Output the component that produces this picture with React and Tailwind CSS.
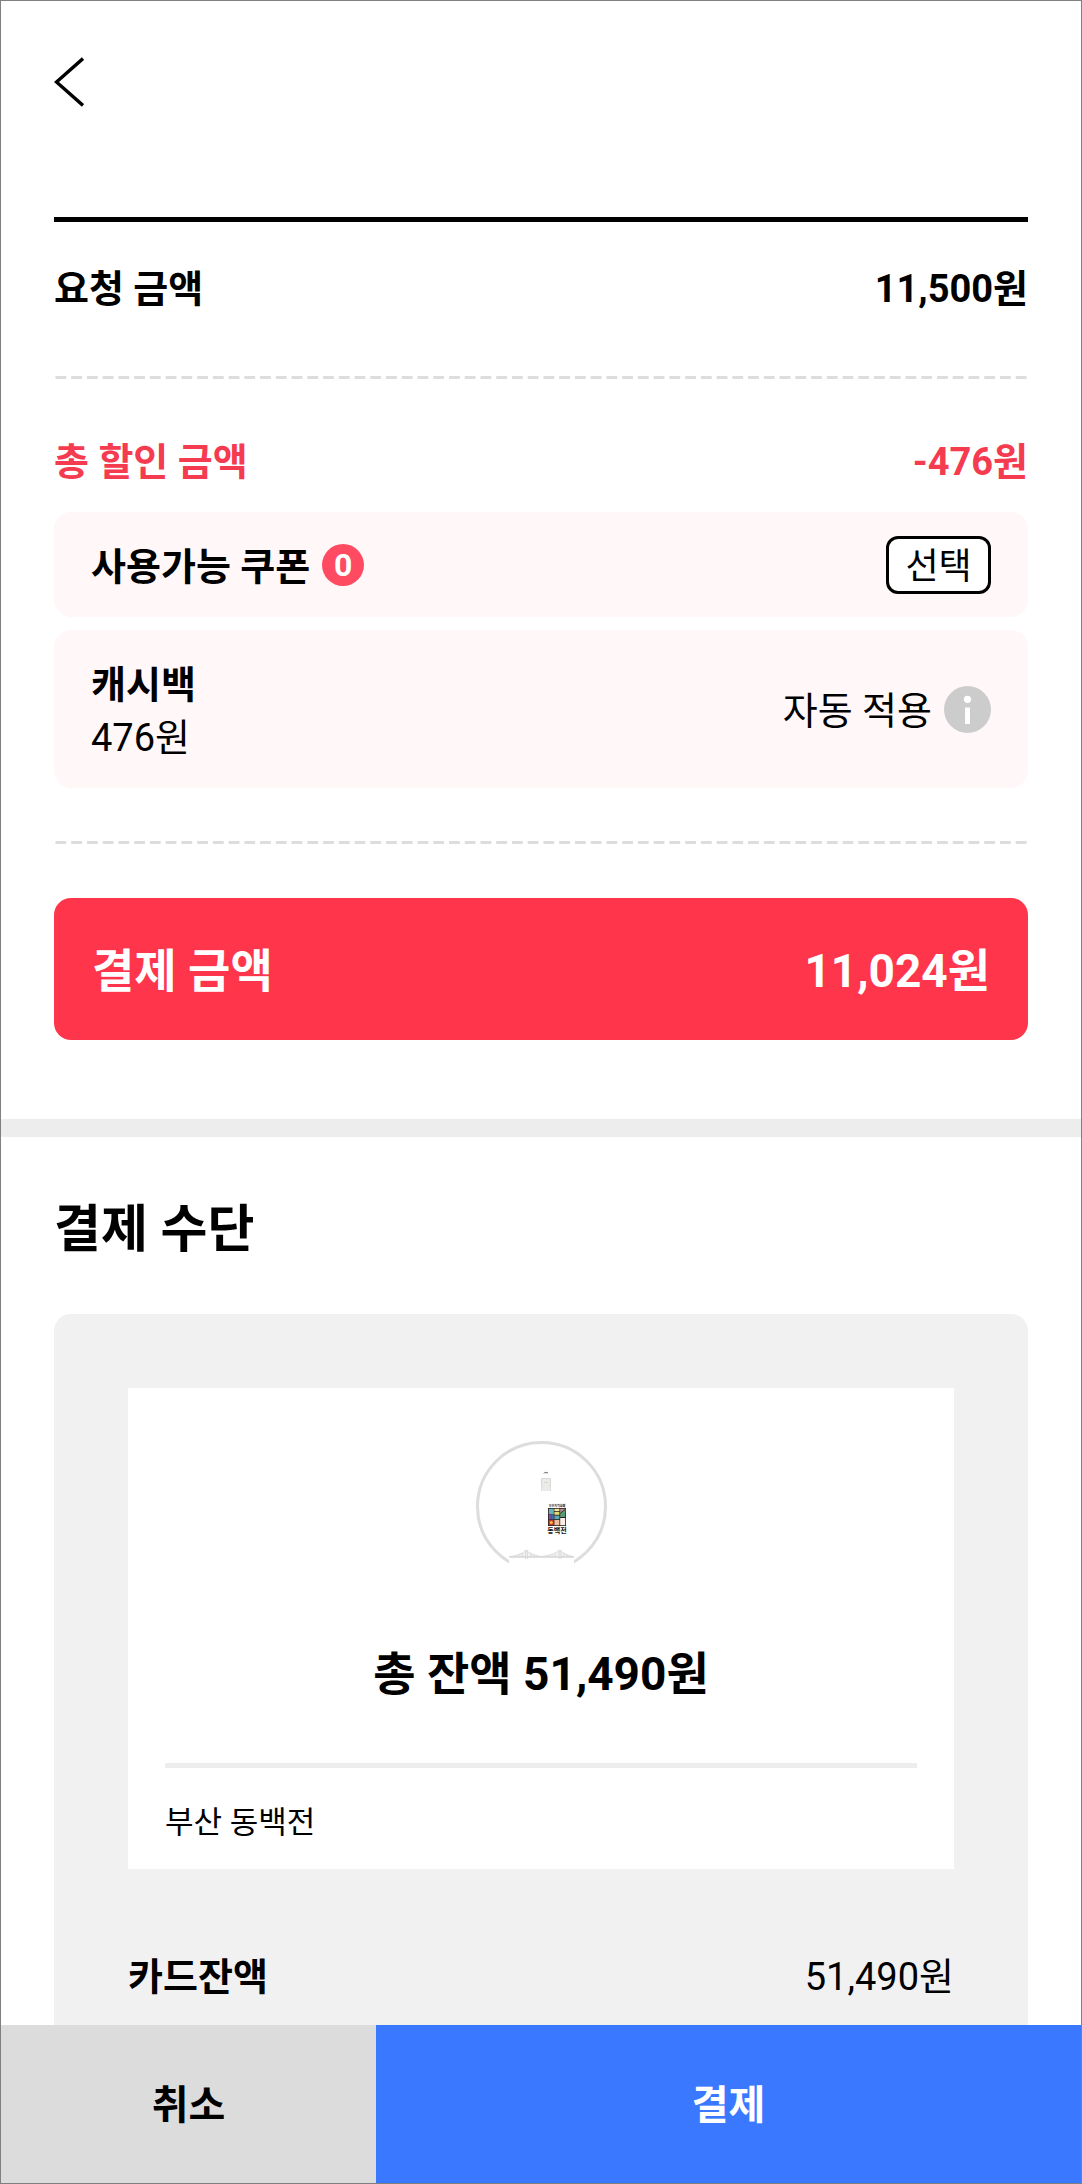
import React, { useState } from 'react';

const payment = {
  requested: 11500,
  discount: 476,
  coupons: 0,
  balance: 51490,
};

const formatWon = (value) => `${value.toLocaleString('en-US')}원`;

const DashedLine = () => (
  <svg className="block w-full h-[3px]" aria-hidden="true">
    <line
      x1="0.15%"
      x2="99.85%"
      y1="1.5"
      y2="1.5"
      stroke="#dddddd"
      strokeWidth="3"
      pathLength="987"
      strokeDasharray="11 5"
    />
  </svg>
);

const BackIcon = () => (
  <svg className="block" width="30" height="50" viewBox="0 0 30 50" fill="none" aria-hidden="true">
    <path d="M29 1.5 L2.5 25 L29 48.5" stroke="#000" strokeWidth="3.4" />
  </svg>
);

const InfoIcon = () => (
  <svg className="block" width="47" height="47" viewBox="0 0 47 47" aria-hidden="true">
    <circle cx="23.5" cy="23.5" r="23.5" fill="#cccccc" />
    <circle cx="23.5" cy="13.3" r="3.6" fill="#fff" />
    <rect x="21" y="21.5" width="5" height="16.5" fill="#fff" />
  </svg>
);

const CardLogo = () => (
  <svg width="131" height="131" viewBox="0 0 131 131" role="img" aria-label="동백전">
    <circle cx="65.5" cy="65.5" r="64" fill="#fff" stroke="#dddddd" strokeWidth="3" />
    <rect x="33" y="117" width="65" height="14" fill="#fff" />

    {/* bell */}
    <path d="M68 32.5 Q69 30.5 70 31.5 T72 31.5" stroke="#555" strokeWidth="0.9" fill="none" />
    <path d="M66 37 H74 Q75 37 75 38 V50 H65 V38 Q65 37 66 37 Z" fill="#ebebe9" />
    <path d="M65.5 37.5 H74.5 M65.5 38 V44 L66.5 46 M74.5 38 V44 L73.5 46 M68 41.5 H72" stroke="#cfcfcd" strokeWidth="0.7" fill="none" />
    <path d="M65.5 46 V50 M74.5 46 V50" stroke="#d8d8d6" strokeWidth="0.7" />

    {/* mosaic mark */}
    <text x="81" y="65.5" textAnchor="middle" fontSize="3" fontWeight="700" fill="#222">부산지역화폐</text>
    <rect x="72" y="67" width="18" height="18" fill="#2b2323" />
    <rect x="72.8" y="67.8" width="5" height="5.4" fill="#68b3bb" />
    <rect x="72.8" y="73.4" width="2.2" height="5" fill="#7a4f9c" />
    <rect x="75.2" y="73.4" width="2.6" height="5" fill="#3f6db3" />
    <rect x="72.8" y="79" width="5" height="5.2" fill="#c9352b" />
    <circle cx="75.3" cy="81.5" r="1.5" fill="#f9c23c" />
    <rect x="78.4" y="67.8" width="5" height="2.2" fill="#f3e79a" />
    <rect x="78.4" y="70.8" width="5" height="3" fill="#e0dc74" />
    <rect x="78.4" y="74.6" width="5" height="3.6" fill="#5ba7b4" />
    <rect x="78.4" y="79" width="5" height="5.2" fill="#f0bb9f" />
    <rect x="84.2" y="67.8" width="5" height="4.4" fill="#c08a94" />
    <path d="M84.2 71.6 L89.2 67.8 V76 H84.2 Z" fill="#5a9a72" />
    <path d="M84.2 72.4 L89.2 68.4" stroke="#2b2323" strokeWidth="0.8" />
    <rect x="84.2" y="77" width="5" height="7.2" fill="#fbeee6" />
    <text x="81" y="91.5" textAnchor="middle" fontSize="7" fontWeight="700" fill="#111">동백전</text>

    {/* bridge */}
    <g fill="#f1f1f1">
      <path d="M35 116 Q46 114 50 109 Q55 114 64 116 Z" />
      <path d="M68 116 Q79 114 84 109 Q88 114 97 116 Z" />
    </g>
    <g stroke="#d6d6d6" strokeWidth="0.8" fill="none">
      <path d="M33 116 H98" strokeWidth="1.4" />
      <path d="M34 115.5 Q46 114 50 109 Q55 114 65 115.5 Q78 114 84 109 Q88 114 97 115.5" />
      <path d="M49.5 109 V118 M51.5 109 V118 M83 109 V118 M85 109 V118" />
      <path d="M40 114 V116 M43 113 V116 M46 112 V116 M55 112 V116 M58 113 V116 M61 114 V116 M73 114 V116 M76 113 V116 M79 112 V116 M88 112 V116 M91 113 V116 M94 114 V116" />
    </g>
  </svg>
);

const App = () => {
  const [step, setStep] = useState('review');
  const total = payment.requested - payment.discount;

  return (
    <div className="flex h-screen flex-col border border-[#808080] bg-white font-[Roboto,'Noto_Sans_CJK_KR',sans-serif] text-[38px] leading-[50px] text-black">
      <main className="min-h-0 flex-1 overflow-y-auto [scrollbar-width:none]">
        <section className="px-[53px] pb-[79px]">
          <header className="pt-14 pb-[110px]">
            <button type="button" aria-label="뒤로" className="block" onClick={() => setStep('review')}>
              <BackIcon />
            </button>
          </header>

          <div className="flex justify-between border-t-5 border-black pt-[42px] pb-[62px] font-bold">
            <span>요청 금액</span>
            <span>{formatWon(payment.requested)}</span>
          </div>

          <DashedLine />

          <div className="flex justify-between pt-[58px] pb-[25px] font-bold text-[#f53b50]">
            <span>총 할인 금액</span>
            <span>-{formatWon(payment.discount)}</span>
          </div>

          <div className="mb-[53px] flex flex-col gap-[13px]">
            <div className="flex h-[105px] items-center justify-between rounded-[17px] bg-[#fff7f8] px-[37px]">
              <div className="flex items-center gap-3 font-bold">
                <span className="pt-1">사용가능 쿠폰</span>
                <span className="flex size-[42px] items-center justify-center rounded-full bg-[#ff4b62] text-[32px] text-white">
                  {payment.coupons}
                </span>
              </div>
              <button
                type="button"
                className="h-[58px] w-[105px] rounded-xl border-3 border-black bg-white pt-1 text-[36px] leading-10"
              >
                선택
              </button>
            </div>

            <div className="flex h-[158px] items-center justify-between rounded-[17px] bg-[#fff7f8] px-[37px] leading-[53px]">
              <div className="pt-1.5">
                <p className="font-bold">캐시백</p>
                <p>{formatWon(payment.discount)}</p>
              </div>
              <div className="flex items-center gap-3">
                <span className="pt-1">자동 적용</span>
                <button type="button" aria-label="캐시백 안내">
                  <InfoIcon />
                </button>
              </div>
            </div>
          </div>

          <DashedLine />

          <div className="mt-[54px] flex h-[142px] items-center justify-between rounded-[17px] bg-[#ff364b] px-[38px] pt-1 text-[46px] font-bold text-white">
            <span>결제 금액</span>
            <span>{formatWon(total)}</span>
          </div>
        </section>

        <section className="border-t-18 border-[#ededed] px-[53px]">
          <h2 className="pt-[58px] pb-[49px] text-[51px] leading-[70px] font-bold">결제 수단</h2>

          <div className="rounded-t-[17px] bg-[#f1f1f1] px-[74px] pt-[74px] pb-24">
            <div className="bg-white px-[37px]">
              <div className="flex flex-col items-center border-b-5 border-[#ededed] pt-[53px] pb-[59px]">
                <CardLogo />
                <p className="pt-[72px] text-[46px] leading-[60px] font-bold">총 잔액 {formatWon(payment.balance)}</p>
              </div>
              <p className="pt-[35px] pb-[26px] text-[31px] leading-10">부산 동백전</p>
            </div>

            <div className="flex justify-between pt-[83px]">
              <span className="font-bold">카드잔액</span>
              <span>{formatWon(payment.balance)}</span>
            </div>
          </div>
        </section>
      </main>

      <footer className="grid h-[158px] shrink-0 grid-cols-[25fr_47fr] text-[40px] font-bold">
        <button type="button" className="bg-[#dcdcdc] pt-1" onClick={() => setStep('cancelled')}>
          취소
        </button>
        <button
          type="button"
          className="bg-[#3a79ff] pt-1 text-white"
          disabled={step === 'paid'}
          onClick={() => setStep('paid')}
        >
          결제
        </button>
      </footer>
    </div>
  );
};

export default App;
